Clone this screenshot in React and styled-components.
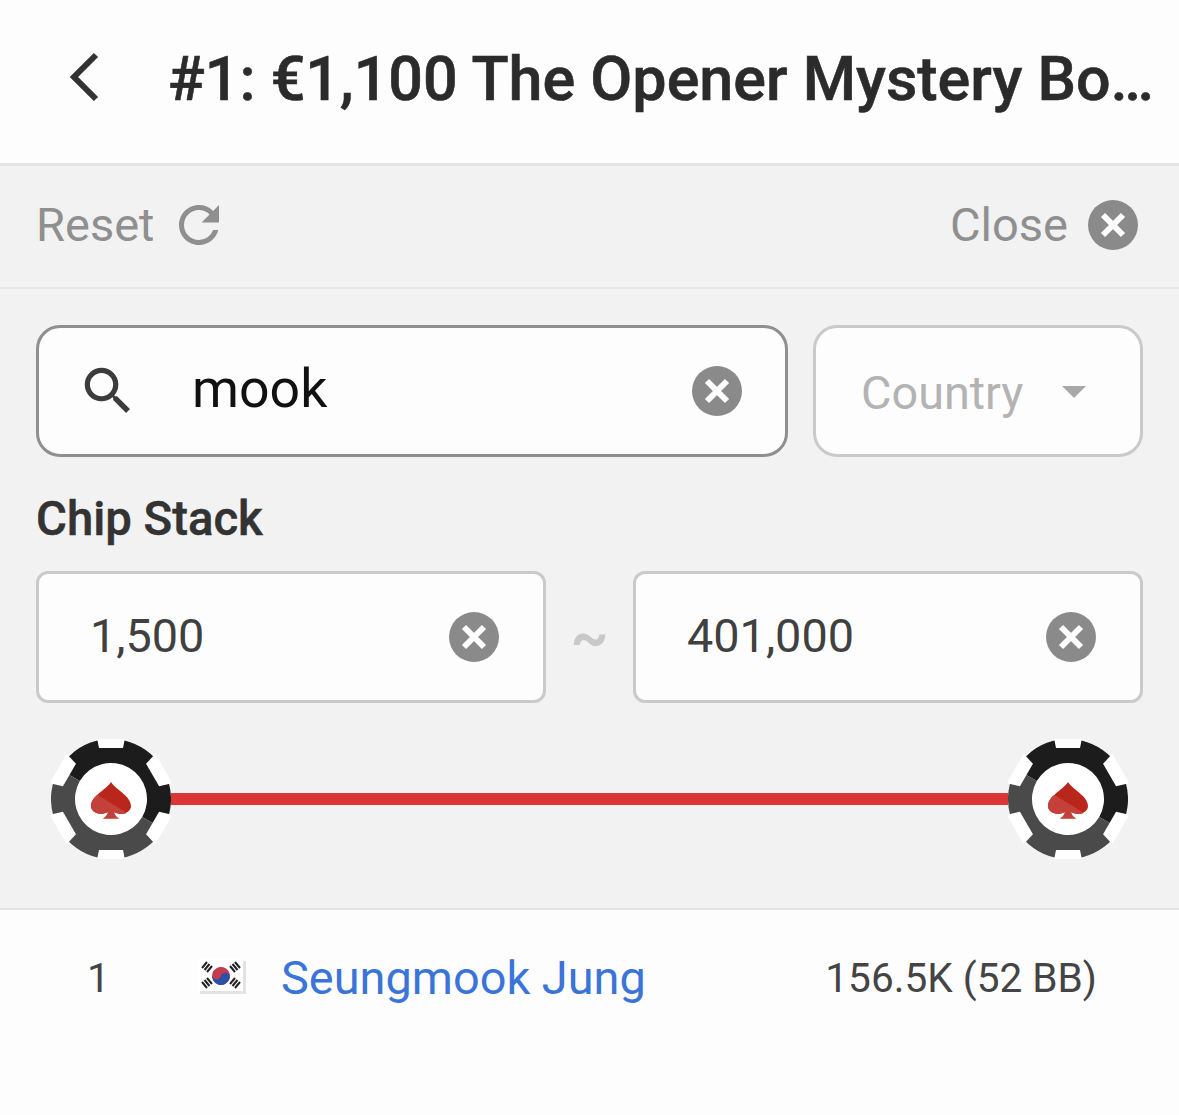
import React from "react"
import styled, { createGlobalStyle } from "styled-components"
import { MdRefresh, MdSearch } from "react-icons/md"

const Global = createGlobalStyle`
html, body { margin: 0; padding: 0; background: #fdfdfd; }
body { font-family: Roboto, "Liberation Sans", sans-serif; }
`

const ClearIcon = ({ size = 50 }) => (
  <svg width={size} height={size} viewBox="0 0 50 50">
    <circle cx="25" cy="25" r="25" fill="#8a8a8a" />
    <path d="M15 15L35 35M35 15L15 35" stroke="#fdfdfd" strokeWidth="6" />
  </svg>
)

const BackIcon = () => (
  <svg width="32" height="50" viewBox="0 0 32 50">
    <path d="M28 3L6 25L28 47" fill="none" stroke="#333" strokeWidth="6" />
  </svg>
)

const Chip = () => (
  <ChipSvg viewBox="0 0 120 120">
    <circle cx="60" cy="60" r="60" fill="#fff" />
    {/* two halves of the ring */}
    <path d="M8 30A60 60 0 0 1 112 90L91.200 78A36 36 0 0 0 28.800 42Z" fill="#1c1c1c" />
    <path d="M8 30A60 60 0 0 0 112 90L91.200 78A36 36 0 0 1 28.800 42Z" fill="#4a4a4a" />
    {[0, 180].map((a) => (
      <path key={a} d="M46 -1H74L72 9H48Z" fill="#fff" transform={`rotate(${a} 60 60)`} />
    ))}
    {[60, 120, 240, 300].map((a) => (
      <path key={a} d="M43 -1H77L73 12H47Z" fill="#fff" transform={`rotate(${a} 60 60)`} />
    ))}
    <path
      d="M60 43C65 51 80 57 80 67C80 74 70 77 63 73C63.500 76 65 78 68 79.500H52C55 78 56.500 76 57 73C50 77 40 74 40 67C40 57 55 51 60 43Z"
      fill="#b9271c"
    />
    <path d="M46.500 56C42.500 59 40 62.500 40 67C40 74 50 77 57 73C56.500 76 55 78 52 79.500H68C65 78 63.500 76 63 73C67 75.300 72.500 75.800 76 74Z" fill="#c4403a" />
  </ChipSvg>
)

const KoreaFlag = () => (
  <FlagSvg viewBox="0 0 49 36">
    <rect x="3" y="3" width="46" height="33" fill="#e2e2e2" />
    <rect x="0" y="0" width="46" height="33" fill="#fff" />
    <g transform="rotate(15 24 18)">
      <circle cx="24" cy="18" r="9" fill="#c43c4c" />
      <path d="M15 18A4.500 4.500 0 0 0 24 18A4.500 4.500 0 0 1 33 18A9 9 0 0 1 15 18Z" fill="#2c50a8" />
    </g>
    <g stroke="#222" strokeWidth="2">
      <path d="M5 10L10 4M7.500 12L12.500 6M10 14L15 8" />
      <path d="M33 8L38 14M35.500 6L40.500 12M38 4L43 10" />
      <path d="M5 24L10 30M7.500 22L12.500 28M10 20L15 26" />
      <path d="M33 26L38 20M35.500 28L40.500 22M38 30L43 24" />
    </g>
  </FlagSvg>
)

const App = () => {
  return (
    <Page>
      <Global />
      <Header>
        <BackButton><BackIcon /></BackButton>
        <Title>#1: €1,100 The Opener Mystery Bounty</Title>
      </Header>
      <Toolbar>
        <ToolButton>
          <ToolLabel>Reset</ToolLabel>
          <MdRefresh size={60} color="#8f8f8f" />
        </ToolButton>
        <ToolButton $tight>
          <ToolLabel>Close</ToolLabel>
          <ClearIcon />
        </ToolButton>
      </Toolbar>
      <Filters>
        <SearchRow>
          <SearchBox>
            <SearchGlyph><MdSearch size={62} color="#3c3c3c" /></SearchGlyph>
            <SearchText>mook</SearchText>
            <ClearIcon />
          </SearchBox>
          <CountryBox>
            <CountryText>Country</CountryText>
            <Caret />
          </CountryBox>
        </SearchRow>
        <SectionLabel>Chip Stack</SectionLabel>
        <RangeRow>
          <RangeBox>
            <RangeValue>1,500</RangeValue>
            <ClearIcon />
          </RangeBox>
          <Tilde>~</Tilde>
          <RangeBox>
            <RangeValue>401,000</RangeValue>
            <ClearIcon />
          </RangeBox>
        </RangeRow>
        <Slider>
          <Chip />
          <Track />
          <Chip />
        </Slider>
      </Filters>
      <PlayerRow>
        <Rank>1</Rank>
        <FlagCell><KoreaFlag /></FlagCell>
        <PlayerName>Seungmook Jung</PlayerName>
        <Stack>156.5K (52 BB)</Stack>
      </PlayerRow>
    </Page>
  )
}

export default App

const Page = styled.div`
width: 1179px;
height: 1115px;
overflow: hidden;
background: #fdfdfd;
`
const Header = styled.div`
height: 163px;
display: flex;
align-items: center;
box-sizing: border-box;
padding: 0 24px 6px 68px;
`
const BackButton = styled.div`
width: 100px;
flex: none;
display: flex;
align-items: center;
margin-bottom: 4px;
`
const Title = styled.div`
flex: 1;
min-width: 0;
font-size: 61px;
font-weight: 500;
color: #2b2b2b;
white-space: nowrap;
overflow: hidden;
text-overflow: ellipsis;
-webkit-text-stroke: 0.6px #2b2b2b;
`
const Toolbar = styled.div`
height: 117px;
display: flex;
align-items: center;
justify-content: space-between;
padding: 0 41px 4px 36px;
background: #f2f2f2;
border-top: 3px solid #e3e3e3;
border-bottom: 2px solid #e6e6e6;
`
const ToolButton = styled.div`
display: flex;
align-items: center;
gap: ${(p) => (p.$tight ? "20px" : "15px")};
`
const ToolLabel = styled.div`
font-size: 47px;
color: #8f8f8f;
`
const Filters = styled.div`
height: 583px;
width: 1107px;
padding: 36px 36px 0;
background: #f2f2f2;
border-bottom: 2px solid #e3e3e3;
`
const SearchRow = styled.div`
display: flex;
justify-content: space-between;
`
const SearchBox = styled.div`
width: 752px;
height: 132px;
box-sizing: border-box;
display: flex;
align-items: center;
padding: 0 43px 0 38px;
background: #fdfdfd;
border: 3px solid #8f8f8f;
border-radius: 24px;
`
const SearchGlyph = styled.div`
width: 115px;
flex: none;
display: flex;
align-items: center;
`
const SearchText = styled.div`
flex: 1;
font-size: 53.6px;
color: #111;
padding-bottom: 5px;
`
const CountryBox = styled.div`
width: 330px;
height: 132px;
box-sizing: border-box;
display: flex;
align-items: center;
padding: 0 54px 0 45px;
justify-content: space-between;
background: #fdfdfd;
border: 3px solid #cacaca;
border-radius: 24px;
`
const CountryText = styled.div`
font-size: 46.8px;
color: #b3b3b3;
padding-top: 4px;
`
const Caret = styled.div`
width: 0;
height: 0;
margin-top: 2px;
border-left: 12px solid transparent;
border-right: 12px solid transparent;
border-top: 12px solid #a8a8a8;
`
const SectionLabel = styled.div`
margin-top: 35px;
height: 54px;
line-height: 54px;
font-size: 47.3px;
font-weight: 500;
color: #333;
-webkit-text-stroke: 0.5px #333;
`
const RangeRow = styled.div`
margin-top: 25px;
display: flex;
align-items: center;
`
const RangeBox = styled.div`
width: 510px;
height: 132px;
box-sizing: border-box;
display: flex;
align-items: center;
justify-content: space-between;
padding: 0 44px 0 51px;
background: #fdfdfd;
border: 3px solid #cacaca;
border-radius: 12px;
`
const RangeValue = styled.div`
font-size: 46.8px;
color: #404040;
padding-bottom: 2px;
`
const Tilde = styled.div`
flex: 1;
text-align: center;
font-size: 58px;
font-weight: 700;
color: #c8c8c8;
`
const Slider = styled.div`
margin: 36px 15px 0;
display: flex;
align-items: center;
`
const ChipSvg = styled.svg`
width: 120px;
height: 120px;
flex: none;
filter: blur(0.6px);
`
const Track = styled.div`
flex: 1;
height: 12px;
background: #db3535;
`
const PlayerRow = styled.div`
height: 136px;
display: flex;
align-items: center;
box-sizing: border-box;
padding: 0 82px 0 87px;
`
const Rank = styled.div`
width: 110px;
flex: none;
font-size: 40.6px;
color: #444;
`
const FlagCell = styled.div`
width: 84px;
flex: none;
display: flex;
align-items: center;
margin-bottom: 4px;
`
const FlagSvg = styled.svg`
width: 49px;
height: 36px;
filter: blur(0.4px);
`
const PlayerName = styled.div`
flex: 1;
font-size: 46.9px;
color: #3b74d8;
padding-bottom: 2px;
`
const Stack = styled.div`
font-size: 40.6px;
color: #444;
`
